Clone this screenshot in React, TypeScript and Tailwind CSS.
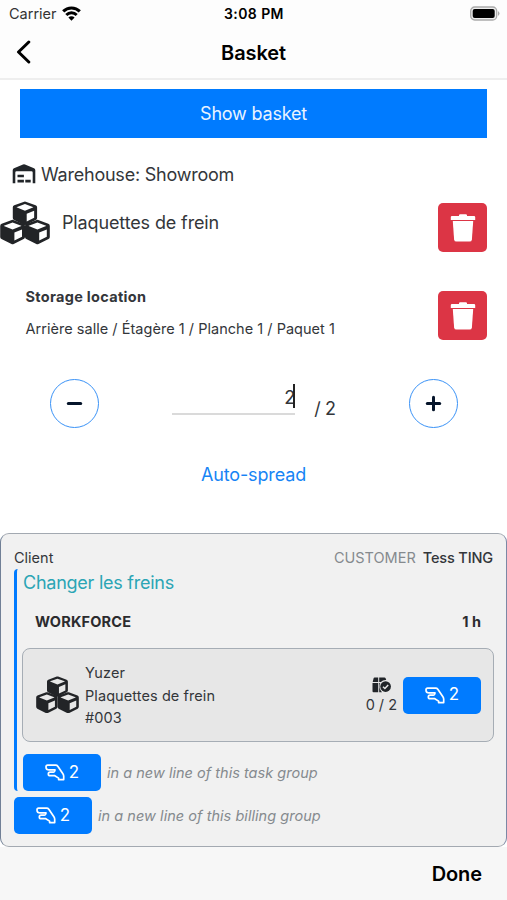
import React from "react";

const cubePath =
  "M12.100 .4Q12.900 .1 13.700 .4L23.800 4.100Q25.300 4.700 25.300 6.300V17.300Q25.300 18.800 24 19.500L14 24.500Q12.900 25 11.800 24.500L1.800 19.500Q.5 18.800 .5 17.300V6.300Q.5 4.700 2 4.100zM12.900 2.900L4.200 6.100V6.300L12.900 9.900L21.600 6.300V6.100zM14.700 13V21L22.300 17.200V9.800z";

function CubesIcon({ size }: { size: number }) {
  return (
    <svg width={size} height={size * 0.88} viewBox="0 0 50 44" fill="#222427" fillRule="evenodd" className="shrink-0">
      <g transform="translate(12.300 .3) scale(.98 .96)">
        <path d={cubePath} />
      </g>
      <g transform="translate(-.3 18.600)">
        <path d={cubePath} />
      </g>
      <g transform="translate(24.500 18.600)">
        <path d={cubePath} />
      </g>
    </svg>
  );
}

function TrashIcon() {
  return (
    <svg width="26" height="28" viewBox="0 0 26 28" fill="white">
      <path d="M9 1.200Q9 .3 10.300 .3h5.400Q17 .3 17 1.200v.8h7Q25.200 2 25.200 3v2.900H.8V3Q.8 2 2 2h7z" />
      <path d="M2.800 7h20.400l-1.300 18.400Q21.700 27.600 19.500 27.600H6.500Q4.300 27.600 4.100 25.400z" />
    </svg>
  );
}

function TrashButton() {
  return (
    <button className="flex h-[49px] w-[49px] shrink-0 items-center justify-center rounded-[5px] bg-[#dc3545]">
      <TrashIcon />
    </button>
  );
}

function WarehouseIcon() {
  return (
    <svg width="24" height="20" viewBox="0 0 24 20" fill="#212529" className="shrink-0">
      <path d="M.7 19.300V6.200Q.7 4.800 2 4.200L11 .5q1-.4 2 0L22 4.200q1.300.6 1.300 2V19.300H20.700V8.500Q20.700 7.300 19.500 7.300H4.500Q3.300 7.300 3.300 8.500V19.300z" />
      <path d="M5.500 10.700h6.400v2.500H5.500zM5.500 15.800h6.400v2.600H5.500zM13.300 15.800h5.400v2.600h-5.400z" />
    </svg>
  );
}

function BoxCheckIcon() {
  return (
    <svg width="19" height="16" viewBox="0 0 19 16" fill="#212529">
      <path d="M2.600 .5H6.200V5H.7L1.600 1.300Q1.800 .5 2.600 .5zM7.200 .5H12.500Q13.300 .5 13.600 1.300L14.200 3Q10.800 2.800 8.900 5H7.200zM.5 6H6.200V15.300H1.500Q.5 15.300 .5 14.300zM7.200 6H8.200Q6.200 11 10 15.300H7.200z" />
      <circle cx="13.600" cy="9.600" r="5.300" />
      <path d="M11 9.700l1.900 1.800 3.300-3.500" fill="none" stroke="#e7e7e7" strokeWidth="1.500" />
    </svg>
  );
}

function HandIcon() {
  return (
    <svg width="20" height="17" viewBox="0 0 20 17" fill="none" stroke="white" strokeWidth="1.700" strokeLinejoin="round">
      <path d="M13.600 15.600V14.100L9.800 11.700H5.200Q3.300 11.700 3.300 9.900Q3.300 8.100 5.200 8.100H8.400Q9.300 8.100 9.600 7.300L10 5.900H4.300Q1 5.900 1 2.900Q1 1.200 2.600 1.200H10.700Q12 1.200 12.800 2.300L17.900 9.800Q18.700 11 18.700 12.300V15.600z" />
    </svg>
  );
}

function GrabButton() {
  return (
    <button className="flex h-[37px] w-[78px] shrink-0 items-center justify-center gap-[4px] rounded-[5px] bg-[#007bff] text-[17px] not-italic text-white">
      <HandIcon />
      <span>2</span>
    </button>
  );
}

function StepButton({ plus = false }: { plus?: boolean }) {
  return (
    <button className="flex h-[49px] w-[49px] items-center justify-center rounded-full border-[1.5px] border-[#3b93f7]">
      <svg width="17" height="17" viewBox="0 0 17 17" stroke="#06152b" strokeWidth="3" strokeLinecap="round">
        <path d="M2.300 8.500h12.400" />
        {plus && <path d="M8.500 2.300v12.400" />}
      </svg>
    </button>
  );
}

export default function App() {
  return (
    <div className="flex h-[900px] w-[507px] flex-col overflow-hidden bg-white font-['Inter',sans-serif] text-[#33363a]">
      <header className="h-[80px] shrink-0 border-b-2 border-[#eeeeee] bg-[#fdfdfd] text-black">
        <div className="grid h-[27px] grid-cols-3 items-center pl-[9px] pr-[7px]">
          <div className="flex items-center gap-[5px] text-[#333]">
            <span className="text-[14.5px]">Carrier</span>
            <svg width="19" height="15" viewBox="0 0 19 15" fill="none" stroke="black" strokeWidth="3">
              <path d="M1.200 5.400a11.700 11.700 0 0 1 16.600 0M4.300 9a7.400 7.400 0 0 1 10.400 0" />
              <path d="M9.500 14.700L6.400 11.500a4.400 4.400 0 0 1 6.200 0z" fill="black" stroke="none" />
            </svg>
          </div>
          <span className="-ml-[1px] text-center text-[14px] font-semibold tracking-[0.4px]">3:08 PM</span>
          <div className="flex justify-end">
            <svg width="31" height="15" viewBox="0 0 31 15">
              <rect x="1.700" y="1" width="26" height="13" rx="4" fill="#eee" stroke="#aaa" strokeWidth="1.300" />
              <rect x="3.700" y="3" width="22" height="9" rx="2" />
              <path d="M29 5q3 2.500 0 5z" fill="#aaa" />
            </svg>
          </div>
        </div>
        <div className="grid h-[51px] grid-cols-3 items-center">
          <svg width="16" height="24" viewBox="0 0 16 24" className="-mt-[1px] ml-[16px]" fill="none" stroke="black" strokeWidth="3" strokeLinecap="round" strokeLinejoin="round">
            <path d="M12.800 2L2.500 12l10.300 10" />
          </svg>
          <h1 className="text-center text-[20px] font-semibold tracking-[-0.1px]">Basket</h1>
        </div>
      </header>

      <main className="flex h-[453px] shrink-0 flex-col pt-[9px]">
        <button className="mx-[20px] h-[49px] shrink-0 bg-[#007bff] text-[18px] tracking-[-0.2px] text-[#e9f3ff]">Show basket</button>
        <div className="mt-[22px] flex h-[28px] items-center gap-[5px] pl-[12px] text-[18px]">
          <WarehouseIcon />
          <span className="tracking-[-0.23px]">Warehouse: Showroom</span>
        </div>
        <div className="mt-[15px] flex h-[49px] items-center pr-[20px]">
          <div className="-mt-[10px] flex grow items-center gap-[12px]">
            <CubesIcon size={50} />
            <span className="text-[18px] tracking-[-0.13px]">Plaquettes de frein</span>
          </div>
          <TrashButton />
        </div>
        <div className="mt-[39px] flex h-[49px] items-center justify-between pl-[25.5px] pr-[20px]">
          <div className="-mt-[6px] text-[14.5px] leading-[32px]">
            <p className="font-bold tracking-[0.3px]">Storage location</p>
            <p className="tracking-[0.03px]">Arrière salle / Étagère 1 / Planche 1 / Paquet 1</p>
          </div>
          <TrashButton />
        </div>
        <div className="mt-[39px] flex h-[50px] items-start justify-between pl-[50px] pr-[49px]">
          <StepButton />
          <div className="flex h-[50px] items-center">
            <div className="-mt-[14px] flex h-[36px] w-[123px] items-start justify-end border-b-2 border-[#dadada] text-[18px]">
              <span className="-mr-[2px] leading-[37px]">2</span>
              <span className="mt-[5px] h-[24px] w-[2px] bg-[#222]" />
            </div>
            <span className="ml-[19px] mt-[8px] text-[18px] tracking-[-0.4px]">/ 2</span>
          </div>
          <StepButton plus />
        </div>
        <button className="mt-[31px] h-[28px] text-[18px] tracking-[-0.15px] text-[#1684f5]">Auto-spread</button>
      </main>

      <section className="h-[314px] shrink-0 rounded-[9px] border border-[#a3a9b1] border-l-[#718096] border-r-[#7c88a5] bg-[#f1f1f1] px-[13px] pt-[13px] text-[14.5px]">
        <div className="flex h-[22px] items-center justify-between">
          <span>Client</span>
          <span className="flex gap-[7px]">
            <span className="text-[#858a8e]">CUSTOMER</span>
            <span className="font-medium tracking-[-0.15px]">Tess TING</span>
          </span>
        </div>
        <div className="h-[222px] rounded-l-[4px] border-l-[3px] border-[#007bff] pl-[6px]">
          <h2 className="h-[27px] text-[18px] leading-[27px] tracking-[-0.25px] text-[#2ba5b5]">Changer les freins</h2>
          <div className="mt-[13px] flex h-[26px] items-center justify-between pl-[12px] pr-[12px] font-bold text-[#2b2b2e]">
            <span className="tracking-[0.18px]">WORKFORCE</span>
            <span>1 h</span>
          </div>
          <div className="-ml-[1px] -mr-[1px] mt-[13px] flex h-[94px] items-center rounded-[8px] border border-[#a6adb5] bg-[#e7e7e7] pl-[13px] pr-[12px]">
            <div className="-mt-[1px]">
              <CubesIcon size={43} />
            </div>
            <div className="ml-[6px] mt-[2px] grow leading-[22.5px] tracking-[0.08px]">
              <p>Yuzer</p>
              <p>Plaquettes de frein</p>
              <p>#003</p>
            </div>
            <div className="mr-[6px] flex flex-col items-center gap-[3px]">
              <BoxCheckIcon />
              <span className="leading-[18px]">0 / 2</span>
            </div>
            <GrabButton />
          </div>
          <div className="mt-[12px] flex items-center gap-[6px] italic tracking-[0.02px] text-[#858a8e]">
            <GrabButton />
            <span>in a new line of this task group</span>
          </div>
        </div>
        <div className="mt-[6px] flex items-center gap-[6px] italic tracking-[0.04px] text-[#858a8e]">
          <GrabButton />
          <span>in a new line of this billing group</span>
        </div>
      </section>
      <footer className="flex grow items-center justify-end bg-[#f7f7f7] pr-[25px] text-[20px] font-semibold tracking-[-0.1px] text-black">
        <button>Done</button>
      </footer>
    </div>
  );
}
